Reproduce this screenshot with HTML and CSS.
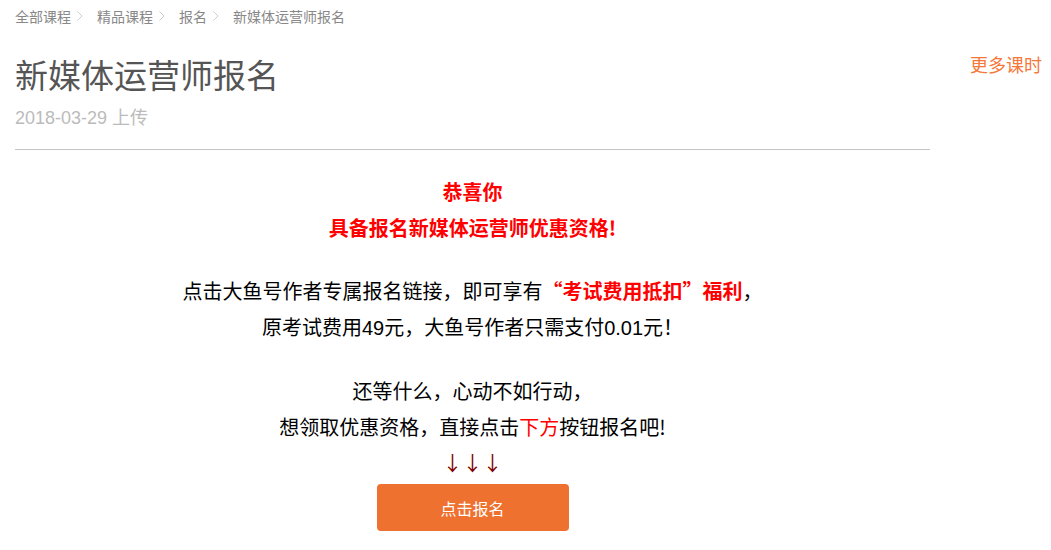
FILE: index.html
```html
<!DOCTYPE html>
<html lang="zh-CN">
<head>
<meta charset="utf-8">
<title>新媒体运营师报名</title>
<link rel="stylesheet" href="styles.css">
</head>
<body>
<div class="page">
  <div class="main">
    <nav class="crumbs">
      <a class="crumb">全部课程</a><svg class="sep" width="6" height="10" viewBox="0 0 6 10"><polyline points="0.5,0.5 5,5 0.5,9.5" fill="none" stroke="#cccccc" stroke-width="1"/></svg><a class="crumb">精品课程</a><svg class="sep" width="6" height="10" viewBox="0 0 6 10"><polyline points="0.5,0.5 5,5 0.5,9.5" fill="none" stroke="#cccccc" stroke-width="1"/></svg><a class="crumb">报名</a><svg class="sep" width="6" height="10" viewBox="0 0 6 10"><polyline points="0.5,0.5 5,5 0.5,9.5" fill="none" stroke="#cccccc" stroke-width="1"/></svg><span class="crumb">新媒体运营师报名</span>
    </nav>
    <header class="head">
      <h1 class="title">新媒体运营师报名</h1>
      <div class="date">2018-03-29 上传</div>
    </header>
    <section class="content">
      <p class="para strong">恭喜你<br>具备报名新媒体运营师优惠资格!</p>
      <p class="para">点击大鱼号作者专属报名链接，即可享有<span class="red bold">“考试费用抵扣”福利</span>，<br>原考试费用<span class="num">49</span>元，大鱼号作者只需支付<span class="num">0.01</span>元！</p>
      <p class="para">还等什么，心动不如行动，<br>想领取优惠资格，直接点击<span class="red">下方</span>按钮报名吧!<br><span class="arrows">↓↓↓</span></p>
      <a class="btn">点击报名</a>
    </section>
  </div>
  <aside class="side">
    <a class="more">更多课时</a>
  </aside>
</div>
</body>
</html>
```

FILE: styles.css
```css
html, body {
  margin: 0;
  padding: 0;
  background: #fff;
}
body {
  font-family: "Noto Sans CJK SC", "Liberation Sans", sans-serif;
  color: #000;
}
.page {
  display: flex;
  align-items: flex-start;
}
.main {
  flex: 0 0 915px;
  margin-left: 15px;
}
.side {
  flex: 1;
  text-align: right;
  padding-right: 9px;
  padding-top: 50px;
}
.more {
  font-size: 18px;
  line-height: 28px;
  color: #f5783a;
  text-decoration: none;
}
.crumbs {
  display: flex;
  align-items: center;
  height: 32px;
  font-size: 14px;
  line-height: 32px;
  color: #888;
}
.crumb {
  color: #888;
  text-decoration: none;
}
.sep {
  display: block;
  margin: 0 14px 0 6px;
}
.head {
  padding-top: 20px;
  padding-bottom: 19px;
  border-bottom: 1px solid #c4c4c4;
}
.title {
  margin: 0;
  font-size: 33px;
  line-height: 44px;
  font-weight: normal;
  color: #555;
}
.date {
  margin-top: 10px;
  font-family: "Liberation Sans", "Noto Sans CJK SC", sans-serif;
  font-size: 18px;
  line-height: 24px;
  color: #bbb;
}
.content {
  padding-top: 24px;
  display: flex;
  flex-direction: column;
  align-items: center;
  text-align: center;
}
.para {
  margin: 0 0 27px;
  font-size: 20px;
  line-height: 36px;
}
.para:nth-of-type(3) {
  margin-bottom: 3px;
}
.strong {
  color: #ff0000;
  font-weight: bold;
}
.red {
  color: #ff0000;
}
.bold {
  font-weight: bold;
}
.num {
  font-family: "Liberation Sans", sans-serif;
}
.arrows {
  color: #800000;
}
.btn {
  display: flex;
  align-items: center;
  justify-content: center;
  width: 192px;
  height: 47px;
  border-radius: 4px;
  background: #ee7130;
  color: #fff;
  font-size: 16px;
  text-decoration: none;
}
```
